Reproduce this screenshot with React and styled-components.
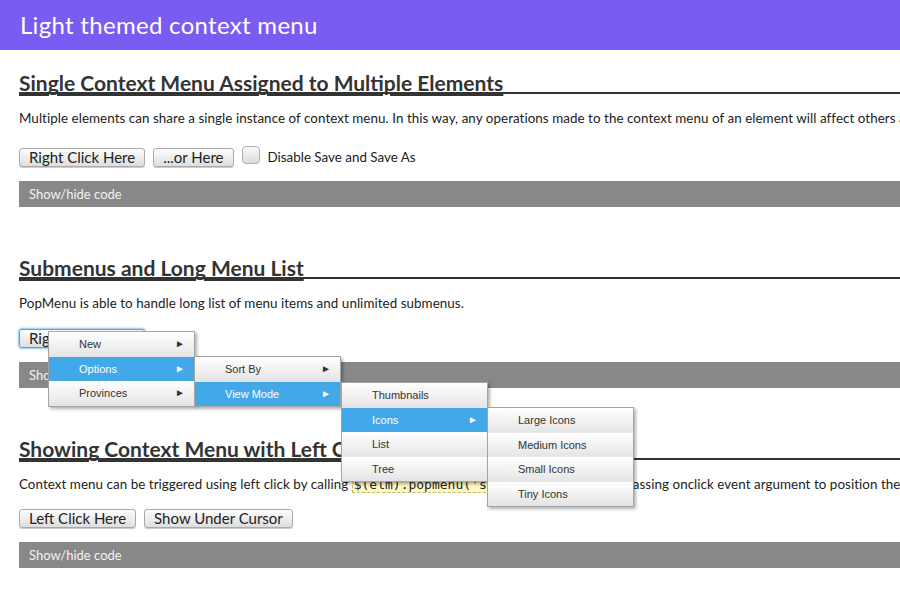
import React from 'react';
import styled, { createGlobalStyle } from 'styled-components';

const GlobalStyle = createGlobalStyle`
  html, body {
    margin: 0;
    padding: 0;
    overflow: hidden;
    background: #fff;
  }
  body {
    font-family: Lato, "Open Sans", sans-serif;
    color: #222;
  }
`;

const Page = styled.div`
  position: relative;
  width: 1100px;
  min-height: 600px;
`;

const Header = styled.div`
  height: 50px;
  background: #7b5cf3;
  color: #fff;
  font-size: 24px;
  line-height: 50px;
  padding-left: 20px;
  letter-spacing: 0.3px;
`;

const Main = styled.div`
  padding: 18px 0 0 19px;
`;

const Section = styled.section`
  margin-bottom: 46px;
`;

const Heading = styled.h2`
  margin: 0;
  padding-top: 6px;
  font-size: 21px;
  line-height: 18px;
  font-weight: bold;
  color: #333;
  text-decoration: underline;
  text-underline-offset: 3px;
  text-decoration-thickness: 2px;
  border-bottom: 2px solid #333;
`;

const Para = styled.p`
  margin: 15px 0 0;
  font-size: 13.4px;
  letter-spacing: 0.05px;
  line-height: 18px;
  white-space: nowrap;
`;

const Code = styled.code`
  font-family: "DejaVu Sans Mono", monospace;
  font-size: 13px;
  letter-spacing: 0;
  background: #fff6c6;
  border: 1px dashed #c8b86a;
  padding: 0 1px;
`;

const Row = styled.div`
  display: flex;
  align-items: center;
  gap: 8px;
  margin-top: ${p => p.$gap}px;
  height: 20px;
`;

const Button = styled.button`
  font-family: Lato, "Open Sans", sans-serif;
  font-size: 15px;
  color: #222;
  height: 19px;
  padding: 0 9px;
  line-height: 17px;
  border: 1px solid ${p => (p.$focused ? '#4aa6e0' : '#aaa')};
  border-radius: 3px;
  background: linear-gradient(#fdfdfd, #dedede);
  box-shadow: ${p => (p.$focused ? '0 0 2px 1px #8cc8f0' : '0 1px 0 #ccc')};
`;

const Check = styled.span`
  width: 16px;
  height: 16px;
  margin: -4px 0 0 0;
  border: 1px solid #b0b0b0;
  border-radius: 4px;
  background: linear-gradient(#fafafa, #dcdcdc);
`;

const Label = styled.span`
  font-size: 13.4px;
`;

const CodeBar = styled.div`
  margin-top: 14px;
  height: 26px;
  line-height: 26px;
  background: #888;
  color: #f2f2f2;
  font-size: 13px;
  padding-left: 10px;
`;

const Menu = styled.ul`
  position: absolute;
  left: ${p => p.$x}px;
  top: ${p => p.$y}px;
  width: 145px;
  margin: 0;
  padding: 0;
  list-style: none;
  border: 1px solid #a4a4a4;
  box-shadow: 2px 2px 3px rgba(0, 0, 0, 0.3);
  font-family: "Liberation Sans", Arial, sans-serif;
  font-size: 11px;
  z-index: 2;
`;

const Item = styled.li`
  position: relative;
  height: 24.5px;
  line-height: 24.5px;
  padding-left: 30px;
  color: ${p => (p.$active ? '#fff' : '#333')};
  background: ${p => (p.$active ? '#42a8e8' : 'linear-gradient(#ffffff, #e4e4e4)')};
`;

const Arrow = styled.span`
  position: absolute;
  right: 9px;
  top: 0;
  font-size: 10px;
`;

const menus = [
  { x: 48, y: 331, items: [['New', true], ['Options', true, true], ['Provinces', true]] },
  { x: 194, y: 356, items: [['Sort By', true], ['View Mode', true, true]] },
  { x: 341, y: 382, items: [['Thumbnails'], ['Icons', true, true], ['List'], ['Tree']] },
  { x: 487, y: 407, items: [['Large Icons'], ['Medium Icons'], ['Small Icons'], ['Tiny Icons']] },
];

const App = () => {
  return (
    <Page>
      <GlobalStyle />
      <Header>Light themed context menu</Header>
      <Main>
        <Section>
          <Heading>Single Context Menu Assigned to Multiple Elements</Heading>
          <Para>
            Multiple elements can share a single instance of context menu. In this way, any operations made to the context menu of an element will affect others as well.
          </Para>
          <Row $gap={20}>
            <Button>Right Click Here</Button>
            <Button>...or Here</Button>
            <Check />
            <Label>Disable Save and Save As</Label>
          </Row>
          <CodeBar>Show/hide code</CodeBar>
        </Section>

        <Section>
          <Heading>Submenus and Long Menu List</Heading>
          <Para>PopMenu is able to handle long list of menu items and unlimited submenus.</Para>
          <Row $gap={16}>
            <Button $focused>Right Click Here</Button>
          </Row>
          <CodeBar>Show/hide code</CodeBar>
        </Section>

        <Section>
          <Heading>Showing Context Menu with Left Click</Heading>
          <Para>
            Context menu can be triggered using left click by calling <Code>{"$(elm).popmenu('show', {event: e})"}</Code> passing onclick event argument to position the menu.
          </Para>
          <Row $gap={14}>
            <Button>Left Click Here</Button>
            <Button>Show Under Cursor</Button>
          </Row>
          <CodeBar>Show/hide code</CodeBar>
        </Section>
      </Main>

      {menus.map((m, i) => (
        <Menu key={i} $x={m.x} $y={m.y}>
          {m.items.map(([label, sub, active]) => (
            <Item key={label} $active={active}>
              {label}
              {sub && <Arrow>&#9658;</Arrow>}
            </Item>
          ))}
        </Menu>
      ))}
    </Page>
  );
};

export default App;
